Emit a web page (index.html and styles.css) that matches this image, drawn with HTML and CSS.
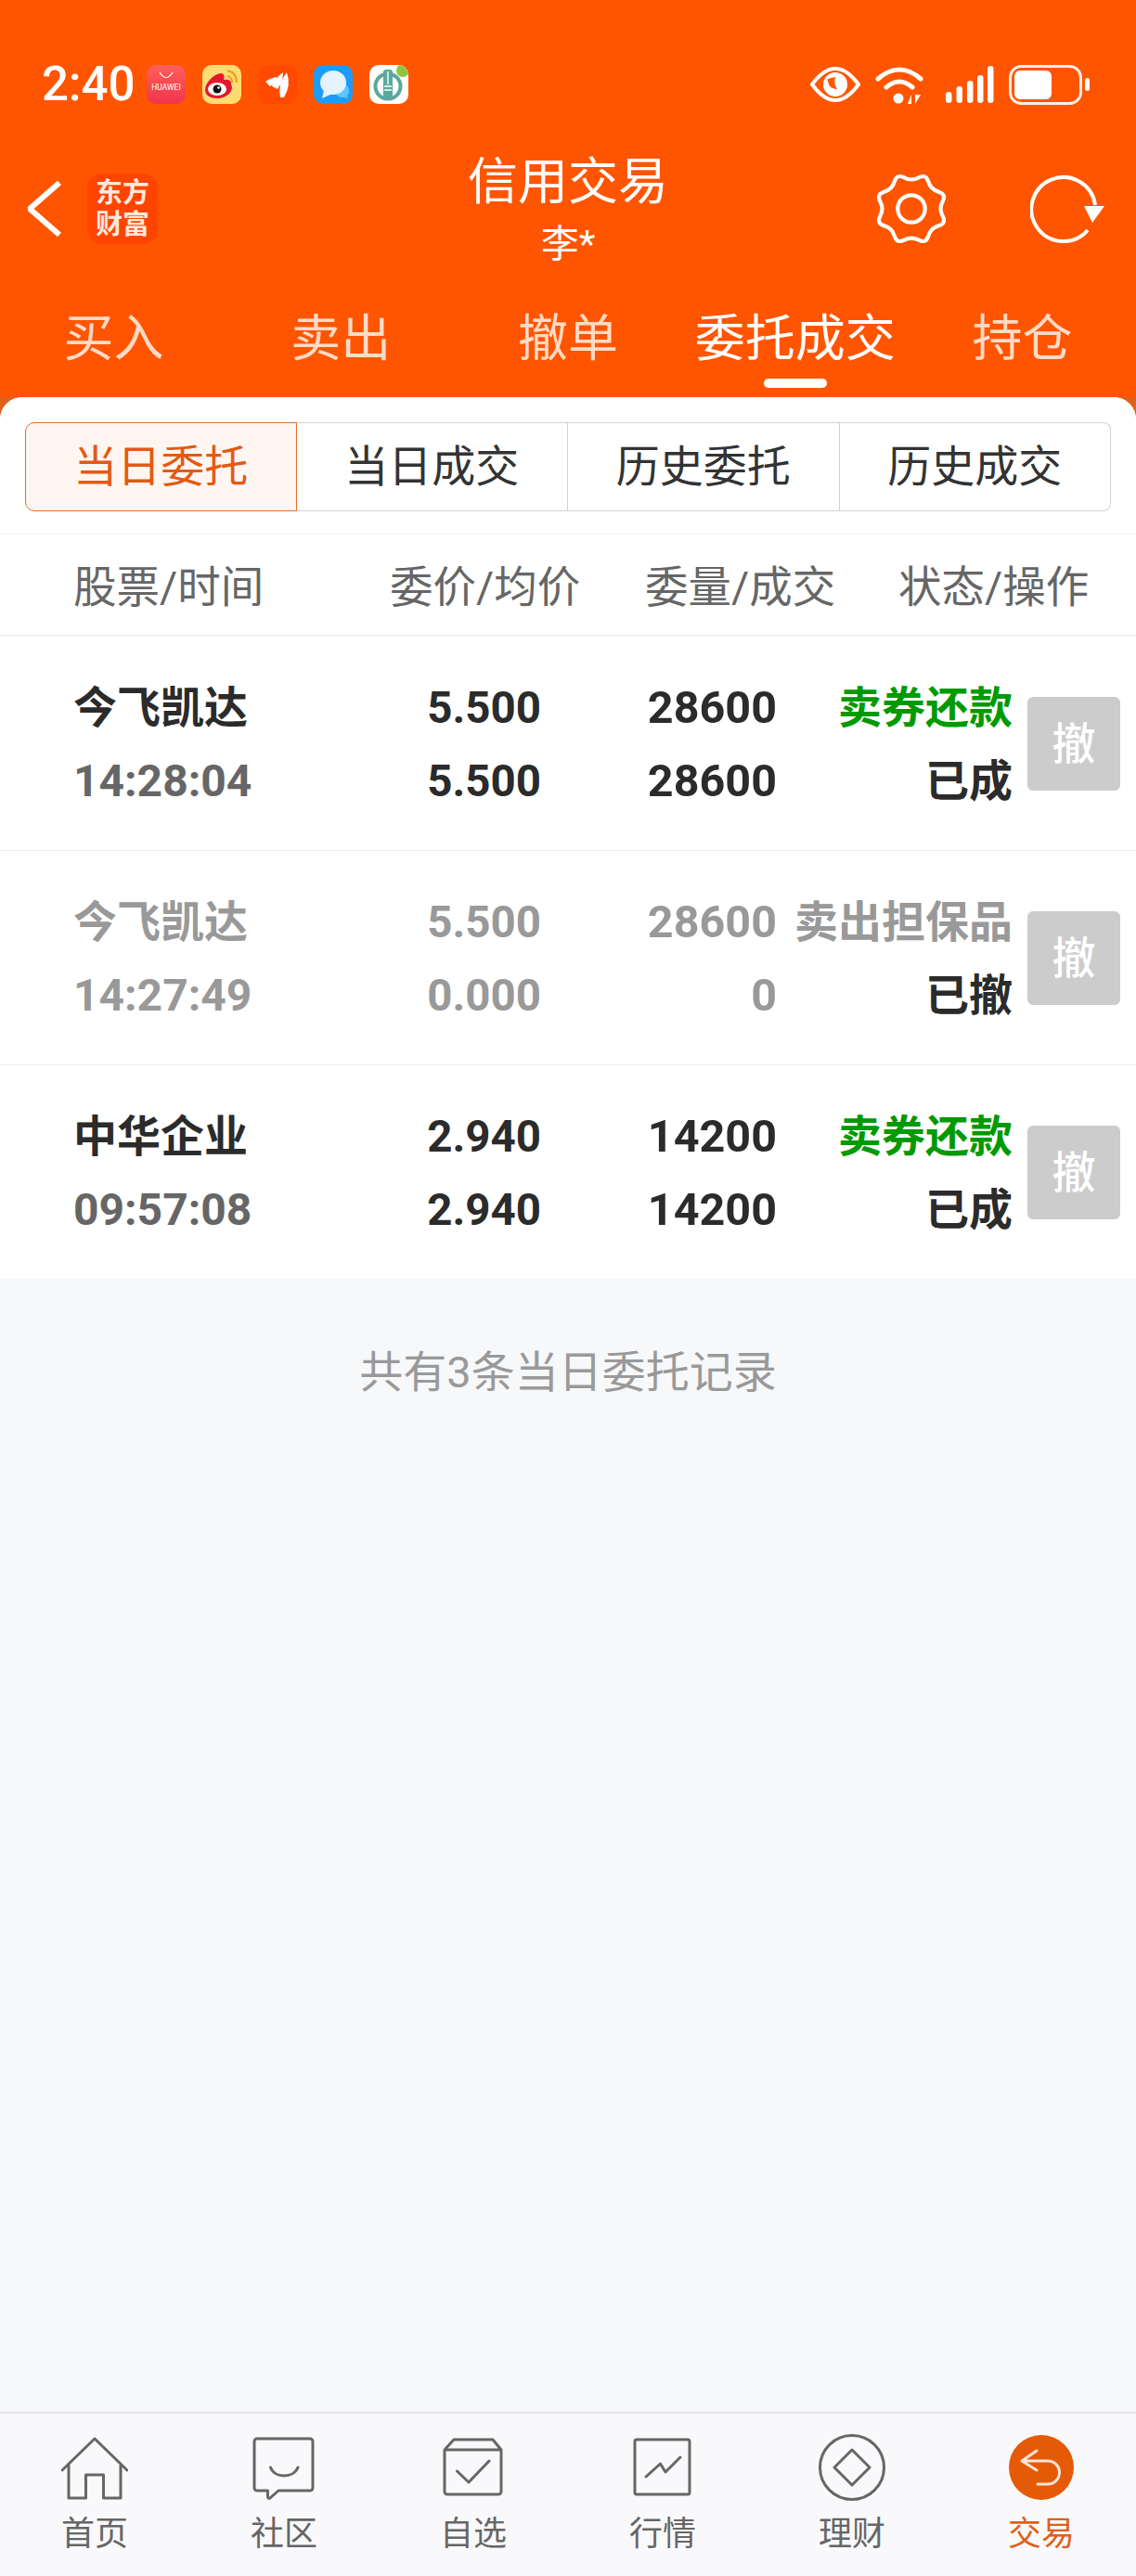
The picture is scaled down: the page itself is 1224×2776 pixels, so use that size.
FILE: index.html
```html
<!DOCTYPE html>
<html lang="zh-CN">
<head>
    <meta charset="UTF-8">
    <meta name="viewport" content="width=device-width, initial-scale=1.0">
    <title>信用交易</title>
    <link rel="stylesheet" href="styles.css">
</head>
<body>
    <header class="top">
        <div class="status-bar">
            <span class="clock">2:40</span>
            <div class="app-icons">
                <svg class="app-icon" viewBox="0 0 42 42">
                    <defs><linearGradient id="hw" x1="0" y1="0" x2="0" y2="1"><stop offset="0" stop-color="#ff5f5a"/><stop offset="1" stop-color="#f0354d"/></linearGradient></defs>
                    <rect width="42" height="42" fill="url(#hw)"/>
                    <path d="M14 8 Q21 19 28 8" fill="none" stroke="#fff" stroke-width="1.2"/>
                    <text x="21" y="27" class="hw-text" text-anchor="middle">HUAWEI</text>
                </svg>
                <svg class="app-icon" viewBox="0 0 42 42">
                    <rect width="42" height="42" fill="#ffdc73"/>
                    <path d="M3 27 C3 19 12 10 20 9 C24 9 24 13 23 16 C28 15 32 17 31 21 C35 28 26 36 16 36 C9 36 3 33 3 27 Z" fill="#e6162d"/>
                    <ellipse cx="16" cy="26" rx="10" ry="7" fill="#fff"/>
                    <circle cx="16" cy="26" r="4.500" fill="#111"/>
                    <circle cx="17.500" cy="24.500" r="1.300" fill="#fff"/>
                    <path d="M27 6 Q37 8 37 19 M27 12 Q32 13 32 19" fill="none" stroke="#f59a1b" stroke-width="2.200"/>
                </svg>
                <svg class="app-icon" viewBox="0 0 42 42">
                    <rect width="42" height="42" fill="#ff4a00"/>
                    <path d="M8 18 Q13 14 20 13 Q19 20 13 23 Z M15 23 Q18 14 27 8 Q27 18 21 26 Z M24 35 Q21 20 31 8 Q36 22 28 35 Z" fill="#fff"/>
                </svg>
                <svg class="app-icon" viewBox="0 0 42 42">
                    <rect width="42" height="42" fill="#1e9bf8"/>
                    <path d="M29 20 Q38 20 38 28 Q38 32 36 33 L37 36 L32 35 Q25 35 24 30 Z" fill="#5cc6ff"/>
                    <ellipse cx="21" cy="19" rx="14" ry="13" fill="#e4f3fd"/>
                    <path d="M11 27 L9 36 L20 31 Z" fill="#e4f3fd"/>
                </svg>
                <svg class="app-icon" viewBox="0 0 42 42">
                    <rect width="42" height="42" fill="#fff"/>
                    <circle cx="20" cy="23" r="13.500" fill="none" stroke="#5ba89d" stroke-width="4"/>
                    <rect x="15" y="5" width="10" height="31" rx="3" fill="#5ba89d"/>
                    <path d="M20 7 V21 M16 23 H24 M16 27 H24" stroke="#fff" stroke-width="1.400"/>
                    <circle cx="36" cy="6" r="7" fill="#8cc63f"/>
                </svg>
            </div>
            <div class="status-icons">
                <svg width="54" height="38" viewBox="0 0 54 38">
                    <path d="M2 19 Q27 -15 52 19 Q27 53 2 19 Z" fill="none" stroke="#fff" stroke-width="4" stroke-linejoin="round"/>
                    <circle cx="27" cy="19" r="13" fill="#fff"/>
                    <path d="M19 13 Q19 24 29 24 Q25 19 27 11" fill="#ff5500"/>
                </svg>
                <svg width="52" height="41" viewBox="0 0 52 41">
                    <path d="M3 14 Q26 -6 49 14 M12 23 Q26 11 40 23" fill="none" stroke="#fff" stroke-width="5" stroke-linecap="round"/>
                    <circle cx="25" cy="35" r="5.500" fill="#fff"/>
                    <path d="M39 31 V41 L35 41 Z M43 31 V41 L49 31 Z" fill="#fff"/>
                </svg>
                <svg width="52" height="40" viewBox="0 0 52 40">
                    <rect x="0" y="28" width="6.500" height="12" rx="3.200" fill="#fff"/>
                    <rect x="11.500" y="22" width="6.500" height="18" rx="3.200" fill="#fff"/>
                    <rect x="23" y="16" width="6.500" height="24" rx="3.200" fill="#fff"/>
                    <rect x="34" y="10" width="6.500" height="30" rx="3.200" fill="#fff"/>
                    <rect x="45" y="0" width="6.500" height="40" rx="3.200" fill="#fff"/>
                </svg>
                <svg width="87" height="43" viewBox="0 0 87 43">
                    <rect x="1.500" y="1.500" width="76" height="40" rx="12" fill="none" stroke="#fff" stroke-width="3" opacity="0.9"/>
                    <rect x="6" y="6" width="40" height="31" rx="6" fill="#fff"/>
                    <rect x="82" y="14" width="5" height="14" rx="2.500" fill="#fff"/>
                </svg>
            </div>
        </div>
        <nav class="title-bar">
            <div class="title-left">
                <svg width="36" height="60" viewBox="0 0 36 60">
                    <path d="M34 2 L2 30 L34 58" fill="none" stroke="#fff" stroke-width="6"/>
                </svg>
                <div class="logo">东方<br>财富</div>
            </div>
            <div class="title-mid">
                <div class="title-main">信用交易</div>
                <div class="title-sub">李*</div>
            </div>
            <div class="title-right">
                <svg width="84" height="84" viewBox="0 0 80 80">
                    <path d="M47.47 7.99 Q54.93 3.97 57.37 12.09 Q59.8 20.2 67.92 22.64 Q76.03 25.07 72.02 32.54 Q68 40 72.02 47.46 Q76.03 54.93 67.92 57.37 Q59.8 59.8 57.37 67.92 Q54.93 76.03 47.47 72.02 Q40 68 32.54 72.02 Q25.07 76.03 22.64 67.92 Q20.2 59.8 12.09 57.37 Q3.97 54.93 7.99 47.46 Q12 40 7.99 32.54 Q3.97 25.07 12.09 22.64 Q20.2 20.2 22.64 12.09 Q25.07 3.97 32.54 7.99 Q40 12 47.47 7.99 Z" fill="none" stroke="#fff" stroke-width="4"/>
                    <circle cx="40" cy="40" r="14" fill="none" stroke="#fff" stroke-width="4"/>
                </svg>
                <svg width="82" height="74" viewBox="0 0 82 74">
                    <path d="M62 60 A34.500 34.500 0 1 1 70 33" fill="none" stroke="#fff" stroke-width="4"/>
                    <path d="M58 34 H80 L67 52 Z" fill="#fff"/>
                </svg>
            </div>
        </nav>
        <div class="main-tabs">
            <div class="main-tab">买入</div>
            <div class="main-tab">卖出</div>
            <div class="main-tab">撤单</div>
            <div class="main-tab active">委托成交<span class="tab-line"></span></div>
            <div class="main-tab">持仓</div>
        </div>
    </header>

    <div class="body-wrap">
        <main class="sheet">
            <div class="seg-wrap">
                <div class="seg">
                    <div class="seg-item active">当日委托</div>
                    <div class="seg-item">当日成交</div>
                    <div class="seg-item">历史委托</div>
                    <div class="seg-item">历史成交</div>
                </div>
            </div>

            <div class="table-head">
                <span>股票/时间</span>
                <span>委价/均价</span>
                <span>委量/成交</span>
                <span>状态/操作</span>
            </div>

            <div class="rows">
                <div class="row">
                    <div class="name">今飞凯达</div>
                    <div class="num">5.500</div>
                    <div class="num qty">28600</div>
                    <div class="state green">卖券还款</div>
                    <div class="cancel">撤</div>
                    <div class="time">14:28:04</div>
                    <div class="num">5.500</div>
                    <div class="num qty">28600</div>
                    <div class="state">已成</div>
                </div>
                <div class="row off">
                    <div class="name">今飞凯达</div>
                    <div class="num">5.500</div>
                    <div class="num qty">28600</div>
                    <div class="state">卖出担保品</div>
                    <div class="cancel">撤</div>
                    <div class="time">14:27:49</div>
                    <div class="num">0.000</div>
                    <div class="num qty">0</div>
                    <div class="state dark">已撤</div>
                </div>
                <div class="row">
                    <div class="name">中华企业</div>
                    <div class="num">2.940</div>
                    <div class="num qty">14200</div>
                    <div class="state green">卖券还款</div>
                    <div class="cancel">撤</div>
                    <div class="time">09:57:08</div>
                    <div class="num">2.940</div>
                    <div class="num qty">14200</div>
                    <div class="state">已成</div>
                </div>
            </div>

            <div class="summary">共有3条当日委托记录</div>
        </main>
    </div>

    <footer class="tabbar">
        <div class="tab">
            <svg class="tab-icon" viewBox="0 0 72 72">
                <path d="M1 39 L36 5 L71 39 M8 32 V69 H26.500 V44 H45.500 V69 H64 V32"/>
            </svg>
            <span>首页</span>
        </div>
        <div class="tab">
            <svg class="tab-icon" viewBox="0 0 72 72">
                <path d="M7 5 H64 a3 3 0 0 1 3 3 V58 a3 3 0 0 1 -3 3 H30 L21 69 Q18.500 70 18.500 67 V61 H7 a3 3 0 0 1 -3 -3 V8 a3 3 0 0 1 3 -3 Z M21.500 36 C26 48 46 48 51 36"/>
            </svg>
            <span>社区</span>
        </div>
        <div class="tab">
            <svg class="tab-icon" viewBox="0 0 72 72">
                <path d="M15 6 H57 L66 17 V62 a3 3 0 0 1 -3 3 H8 a3 3 0 0 1 -3 -3 V17 Z M5 17 H66 M18.500 40 L31 52 L53 29"/>
            </svg>
            <span>自选</span>
        </div>
        <div class="tab">
            <svg class="tab-icon" viewBox="0 0 72 72">
                <path d="M8 6 H63 a2 2 0 0 1 2 2 V63 a2 2 0 0 1 -2 2 H8 a2 2 0 0 1 -2 -2 V8 a2 2 0 0 1 2 -2 Z M18 46 L33.500 32 L39 41 L55 25"/>
            </svg>
            <span>行情</span>
        </div>
        <div class="tab">
            <svg class="tab-icon" viewBox="0 0 72 72">
                <circle cx="36" cy="36" r="34.500"/>
                <path d="M36 17 L55 36 L36 55 L17 36 Z"/>
            </svg>
            <span>理财</span>
        </div>
        <div class="tab active">
            <svg class="tab-icon" viewBox="0 0 72 72">
                <circle class="trade-bg" cx="36" cy="36" r="35"/>
                <path class="trade-arrow" d="M31 18 L15 29 L31 39 M15 29 H43 a12.500 12.500 0 0 1 0 25 H32"/>
            </svg>
            <span>交易</span>
        </div>
    </footer>
</body>
</html>
```

FILE: styles.css
```css
* {
    box-sizing: border-box;
}
html, body {
    margin: 0;
    padding: 0;
}
body {
    width: 1224px;
    height: 2776px;
    display: flex;
    flex-direction: column;
    overflow: hidden;
    font-family: Roboto, "Noto Sans CJK SC", sans-serif;
    background-color: #f7f8fa;
    color: #2b2b2b;
}

/* orange header */
.top {
    background-color: #ff5500;
    color: #fff;
    height: 428px;
}
.status-bar {
    height: 160px;
    padding: 22px 50px 0 45px;
    display: flex;
    align-items: center;
}
.clock {
    width: 113px;
    font-size: 51px;
    line-height: 60px;
    font-weight: 500;
}
.app-icons {
    display: flex;
    gap: 18px;
}
.app-icon {
    width: 42px;
    height: 42px;
    border-radius: 10px;
    display: block;
}
.hw-text {
    font-family: Roboto, sans-serif;
    font-size: 8.5px;
    fill: #fff;
}
.status-icons {
    margin-left: auto;
    display: flex;
    align-items: center;
    gap: 16px;
}
.status-icons svg:nth-child(3) {
    margin-left: 8px;
}
.status-icons svg {
    display: block;
}
.title-bar {
    height: 130px;
    display: grid;
    grid-template-columns: 1fr auto 1fr;
    align-items: start;
}
.title-left {
    height: 130px;
    padding-left: 30px;
    display: flex;
    align-items: center;
    gap: 28px;
}
.logo {
    width: 76px;
    height: 76px;
    border-radius: 16px;
    background-color: #ff4400;
    color: #ffe9de;
    font-size: 29px;
    line-height: 34px;
    font-weight: 700;
    text-align: center;
    padding-top: 4px;
}
.title-mid {
    padding-top: 2px;
    text-align: center;
}
.title-main {
    font-size: 54px;
    line-height: 70px;
}
.title-sub {
    font-size: 41px;
    line-height: 62px;
}
.title-right {
    height: 130px;
    padding-right: 32px;
    display: flex;
    align-items: center;
    justify-content: flex-end;
    gap: 86px;
}
.main-tabs {
    display: grid;
    grid-template-columns: repeat(5, 1fr);
}
.main-tab {
    height: 138px;
    padding-top: 46px;
    font-size: 54px;
    line-height: 60px;
    text-align: center;
    color: #ffdac6;
}
.main-tab.active {
    color: #fff;
}
.tab-line {
    display: block;
    width: 68px;
    height: 10px;
    margin: 12px auto 0;
    border-radius: 5px;
    background-color: #fff;
}

/* sheet */
.body-wrap {
    flex: 1;
    display: flex;
    background-color: #dc621e;
}
.sheet {
    flex: 1;
    border-radius: 24px 24px 0 0;
    background-color: #f7f8fa;
    overflow: hidden;
}
.seg-wrap {
    height: 148px;
    padding: 27px;
    background-color: #fff;
    border-bottom: 1px solid #f3f3f3;
}
.seg {
    display: grid;
    grid-template-columns: repeat(4, 1fr);
    height: 94px;
    width: 1170px;
}
.seg-item {
    border: 1px solid #d2d2d2;
    border-left: none;
    font-size: 47px;
    line-height: 94px;
    text-align: center;
    color: #333;
}
.seg-item:last-child {
    border-radius: 0 8px 8px 0;
}
.seg-item.active {
    border: 1px solid #e0702f;
    border-radius: 10px 0 0 10px;
    background-color: #fff6f2;
    color: #e35a12;
}
.table-head {
    height: 110px;
    padding: 0 0 3px 79px;
    display: grid;
    grid-template-columns: 341px 275px 273px auto;
    align-items: center;
    background-color: #fff;
    border-bottom: 2px solid #f0f0f0;
    font-size: 46.5px;
    color: #666;
}
.row {
    height: 231px;
    padding: 36px 0 0 79px;
    display: grid;
    grid-template-columns: 221px 283px 254px 254px 116px;
    grid-auto-rows: 79px;
    align-items: center;
    background-color: #fff;
    border-bottom: 1px solid #eee;
}
.row:last-child {
    height: 230px;
    border-bottom: none;
}
.name, .state {
    font-size: 47px;
    font-weight: 700;
    margin-bottom: 6px;
}
.time {
    font-size: 48px;
    font-weight: 700;
    color: #666;
    margin-top: 2px;
}
.num {
    font-size: 47.5px;
    font-weight: 700;
    text-align: right;
    margin-top: 2px;
}
.num.qty {
    font-size: 48.5px;
}
.state {
    text-align: right;
    white-space: nowrap;
}
.green {
    color: #009a00;
}
.cancel {
    grid-column: 5;
    grid-row: 1 / span 2;
    align-self: center;
    width: 100px;
    height: 101px;
    margin-left: 16px;
    border-radius: 6px;
    background-color: #ccc;
    color: #fff;
    font-size: 47px;
    font-weight: 500;
    line-height: 101px;
    text-align: center;
}
.row.off .name,
.row.off .time,
.row.off .num,
.row.off .state {
    color: #999;
}
.row.off .state.dark {
    color: #2b2b2b;
}
.summary {
    padding-top: 70px;
    font-size: 47px;
    line-height: 62px;
    text-align: center;
    color: #999;
}

/* bottom tabs */
.tabbar {
    height: 177px;
    display: grid;
    grid-template-columns: repeat(6, 1fr);
    background-color: #f9f9fb;
    border-top: 2px solid #e6e6ea;
    flex-shrink: 0;
}
.tab {
    padding-top: 22px;
    display: flex;
    flex-direction: column;
    align-items: center;
    font-size: 36px;
    line-height: 40px;
    color: #666;
}
.tab.active {
    color: #e0601a;
}
.tab-icon {
    width: 72px;
    height: 72px;
    margin-bottom: 16px;
    fill: none;
    stroke: #666;
    stroke-width: 3;
    stroke-linejoin: round;
    stroke-linecap: round;
}
.tab-icon .trade-bg {
    fill: #e55a07;
    stroke: none;
}
.tab-icon .trade-arrow {
    stroke: #ffe4d4;
}
```
